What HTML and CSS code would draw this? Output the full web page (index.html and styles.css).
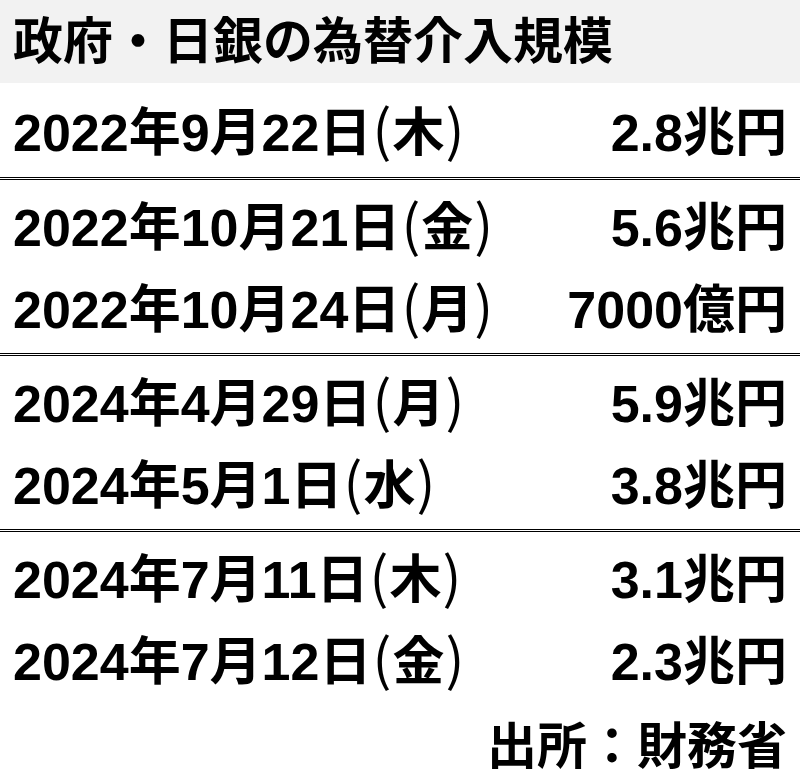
FILE: index.html
```html
<!DOCTYPE html>
<html lang="ja">
<head>
<meta charset="utf-8">
<title>政府・日銀の為替介入規模</title>
<link rel="stylesheet" href="styles.css">
</head>
<body>
<div class="table">
  <div class="title">政府・日銀の為替介入規模</div>
  <div class="group first">
    <div class="row"><span>2022年9月22日<span class="p">(</span>木<span class="p">)</span></span><span>2.8兆円</span></div>
  </div>
  <div class="group">
    <div class="row"><span>2022年10月21日<span class="p">(</span>金<span class="p">)</span></span><span>5.6兆円</span></div>
    <div class="row"><span>2022年10月24日<span class="p">(</span>月<span class="p">)</span></span><span>7000億円</span></div>
  </div>
  <div class="group">
    <div class="row"><span>2024年4月29日<span class="p">(</span>月<span class="p">)</span></span><span>5.9兆円</span></div>
    <div class="row"><span>2024年5月1日<span class="p">(</span>水<span class="p">)</span></span><span>3.8兆円</span></div>
  </div>
  <div class="group">
    <div class="row"><span>2024年7月11日<span class="p">(</span>木<span class="p">)</span></span><span>3.1兆円</span></div>
    <div class="row"><span>2024年7月12日<span class="p">(</span>金<span class="p">)</span></span><span>2.3兆円</span></div>
  </div>
  <div class="source">出所：財務省</div>
</div>
</body>
</html>
```

FILE: styles.css
```css
html, body {
  margin: 0;
  padding: 0;
  background: #ffffff;
}
body {
  font-family: "Liberation Sans", "Noto Sans CJK JP", sans-serif;
  font-weight: 700;
  color: #000000;
}
.title {
  height: 83px;
  line-height: 85px;
  background: #f2f2f2;
  font-size: 50px;
  padding-left: 13px;
}
.group {
  border-top: 3px double #000000;
  padding: 7px 0 2px;
}
.group.first {
  border-top: none;
  padding: 9px 0 3px;
}
.row {
  display: flex;
  justify-content: space-between;
  height: 82px;
  line-height: 82px;
  font-size: 52px;
  padding: 0 13px;
}
.p {
  font-family: "Noto Sans CJK JP", sans-serif;
  font-weight: 400;
  font-size: 56px;
  line-height: 1;
  margin: 0 1px;
}
.source {
  height: 73px;
  line-height: 84px;
  font-size: 50px;
  text-align: right;
  padding-right: 13px;
}
```
